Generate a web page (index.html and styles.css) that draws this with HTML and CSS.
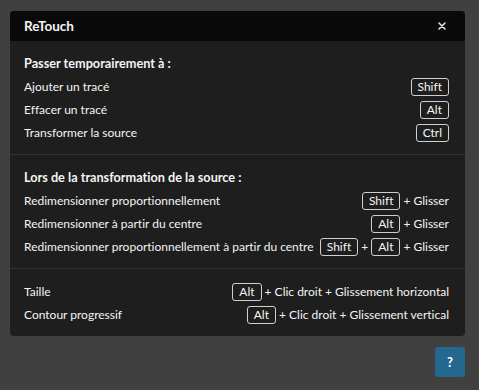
FILE: index.html
```html
<!DOCTYPE html>
<html lang="fr">
<head>
    <meta charset="UTF-8">
    <title>ReTouch</title>
    <link rel="stylesheet" href="styles.css">
</head>
<body>
    <div class="dialogo">
        <div class="cabecera">
            <span class="titulo">ReTouch</span>
            <svg class="cerrar" width="8" height="8" viewBox="0 0 8 8">
                <path d="M1 1 L7 7 M7 1 L1 7" stroke="#e8e8e8" stroke-width="1.5" stroke-linecap="round"/>
            </svg>
        </div>

        <div class="seccion">
            <div class="encabezado">Passer temporairement à :</div>
            <div class="fila"><span>Ajouter un tracé</span><span class="atajo"><kbd>Shift</kbd></span></div>
            <div class="fila"><span>Effacer un tracé</span><span class="atajo"><kbd>Alt</kbd></span></div>
            <div class="fila"><span>Transformer la source</span><span class="atajo"><kbd>Ctrl</kbd></span></div>
        </div>

        <div class="seccion">
            <div class="encabezado">Lors de la transformation de la source :</div>
            <div class="fila"><span>Redimensionner proportionnellement</span><span class="atajo"><kbd>Shift</kbd> + Glisser</span></div>
            <div class="fila"><span>Redimensionner à partir du centre</span><span class="atajo"><kbd>Alt</kbd> + Glisser</span></div>
            <div class="fila"><span>Redimensionner proportionnellement à partir du centre</span><span class="atajo"><kbd>Shift</kbd> + <kbd>Alt</kbd> + Glisser</span></div>
        </div>

        <div class="seccion">
            <div class="fila"><span>Taille</span><span class="atajo"><kbd>Alt</kbd> + Clic droit + Glissement horizontal</span></div>
            <div class="fila"><span>Contour progressif</span><span class="atajo"><kbd>Alt</kbd> + Clic droit + Glissement vertical</span></div>
        </div>
    </div>

    <div class="pie">
        <button class="ayuda">?</button>
    </div>
</body>
</html>
```

FILE: styles.css
```css
body {
    font-family: Lato, "Noto Sans", sans-serif;
    font-variant-ligatures: none;
    background-color: #404040;
    color: #f4f4f4;
    margin: 0;
    padding: 11px 14px 0 10px;
    font-size: 12px;
}

.dialogo {
    background-color: #1e1e1e;
    border-radius: 4px;
    overflow: hidden;
}

.cabecera {
    background-color: #0a0a0a;
    height: 30px;
    display: flex;
    align-items: center;
    justify-content: space-between;
    padding: 0 19px 0 14px;
}

.titulo {
    font-weight: bold;
    font-size: 13.5px;
}

.seccion {
    padding: 11px 16px 10px 14px;
    border-top: 1px solid #333;
}

.cabecera + .seccion {
    border-top: none;
}

.encabezado {
    font-weight: bold;
    font-size: 12.7px;
    height: 23px;
    line-height: 23px;
}

.fila {
    display: flex;
    justify-content: space-between;
    align-items: center;
    height: 23px;
    white-space: nowrap;
}

.atajo {
    display: flex;
    align-items: center;
    gap: 3px;
    margin-left: 4px;
}

kbd {
    font-family: inherit;
    font-size: 12px;
    border: 1px solid #d0d0d0;
    border-radius: 3px;
    padding: 0 6px;
    height: 16px;
    line-height: 16px;
}

.pie {
    display: flex;
    justify-content: flex-end;
    padding-top: 11px;
}

.ayuda {
    width: 30px;
    height: 30px;
    border: none;
    border-radius: 3px;
    background-color: #246890;
    color: #fff;
    font-weight: bold;
    font-size: 13px;
    font-family: inherit;
}
```
